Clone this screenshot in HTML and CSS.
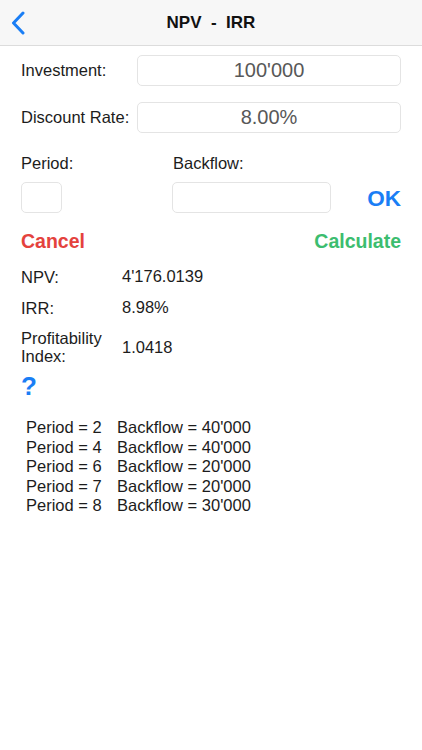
FILE: index.html
```html
<!DOCTYPE html>
<html>
<head>
<meta charset="utf-8">
<link rel="stylesheet" href="styles.css">
</head>
<body>
<div class="nav">
  <div class="back">
    <svg width="14" height="24" viewBox="0 0 14 24"><path d="M12 2 L2.5 12 L12 22" fill="none" stroke="#1a7ef5" stroke-width="3" stroke-linecap="round" stroke-linejoin="round"/></svg>
  </div>
  <div class="title">NPV &nbsp;-&nbsp; IRR</div>
  <div></div>
</div>
<div class="content">
  <div class="field">
    <div class="flabel">Investment:</div>
    <div class="box">100'000</div>
  </div>
  <div class="field second">
    <div class="flabel">Discount Rate:</div>
    <div class="box">8.00%</div>
  </div>
  <div class="pb-labels">
    <div>Period:</div>
    <div>Backflow:</div>
  </div>
  <div class="pb-inputs">
    <div class="sbox period"></div>
    <div class="sbox backflow"></div>
    <div class="ok">OK</div>
  </div>
  <div class="actions">
    <div class="cancel">Cancel</div>
    <div class="calc">Calculate</div>
  </div>
  <div class="results">
    <div class="res"><div class="rl">NPV:</div><div class="rv">4'176.0139</div></div>
    <div class="res"><div class="rl">IRR:</div><div class="rv">8.98%</div></div>
    <div class="res pi"><div class="rl">Profitability<br>Index:</div><div class="rv">1.0418</div></div>
  </div>
  <div class="help">?</div>
  <div class="list">
    <div class="li"><span class="p">Period = 2</span><span>Backflow = 40'000</span></div>
    <div class="li"><span class="p">Period = 4</span><span>Backflow = 40'000</span></div>
    <div class="li"><span class="p">Period = 6</span><span>Backflow = 20'000</span></div>
    <div class="li"><span class="p">Period = 7</span><span>Backflow = 20'000</span></div>
    <div class="li"><span class="p">Period = 8</span><span>Backflow = 30'000</span></div>
  </div>
</div>
</body>
</html>
```
FILE: styles.css
```css
html, body {
  margin: 0;
  padding: 0;
  background: #ffffff;
  font-family: "Liberation Sans", Arial, sans-serif;
  color: #1c1c1c;
}
.nav {
  height: 45px;
  background: #f7f7f7;
  border-bottom: 1px solid #dcdcdc;
  display: grid;
  grid-template-columns: 1fr auto 1fr;
  align-items: center;
}
.back {
  padding-left: 11px;
  display: flex;
  align-items: center;
  height: 45px;
}
.title {
  font-weight: bold;
  font-size: 17px;
  color: #111;
}
.content {
  padding: 0 21px;
}
.field {
  display: flex;
  align-items: center;
  margin-top: 9px;
}
.field.second {
  margin-top: 16px;
}
.flabel {
  width: 116px;
  font-size: 16.5px;
}
.box {
  flex: 1;
  height: 29px;
  border: 1px solid #e4e4e4;
  border-radius: 5px;
  display: flex;
  align-items: center;
  justify-content: center;
  font-size: 20px;
  color: #585858;
}
.pb-labels {
  display: grid;
  grid-template-columns: 152px 1fr;
  margin-top: 20px;
  font-size: 16.5px;
  line-height: 20px;
}
.pb-inputs {
  display: grid;
  grid-template-columns: 151px 159px 1fr;
  align-items: center;
  margin-top: 9px;
}
.sbox {
  height: 29px;
  border: 1px solid #e4e4e4;
  border-radius: 5px;
}
.period {
  width: 39px;
}
.ok {
  text-align: right;
  color: #1a7ef5;
  font-weight: bold;
  font-size: 22.5px;
  padding-top: 2px;
}
.actions {
  display: flex;
  justify-content: space-between;
  margin-top: 17px;
  font-weight: bold;
  font-size: 19.5px;
  line-height: 22px;
}
.cancel {
  color: #e4423d;
}
.calc {
  color: #3cbd6f;
}
.results {
  margin-top: 9px;
  font-size: 16.5px;
}
.res {
  display: flex;
  align-items: center;
  height: 31px;
}
.res.pi {
  height: 48px;
}
.rl {
  width: 101px;
  line-height: 18px;
}
.help {
  color: #1a7ef5;
  font-weight: bold;
  font-size: 26px;
  line-height: 28px;
  margin-top: 1px;
}
.list {
  margin-top: 18px;
  padding-left: 5px;
  font-size: 16.5px;
  line-height: 19.6px;
}
.li {
  display: flex;
}
.p {
  width: 91px;
}
```
